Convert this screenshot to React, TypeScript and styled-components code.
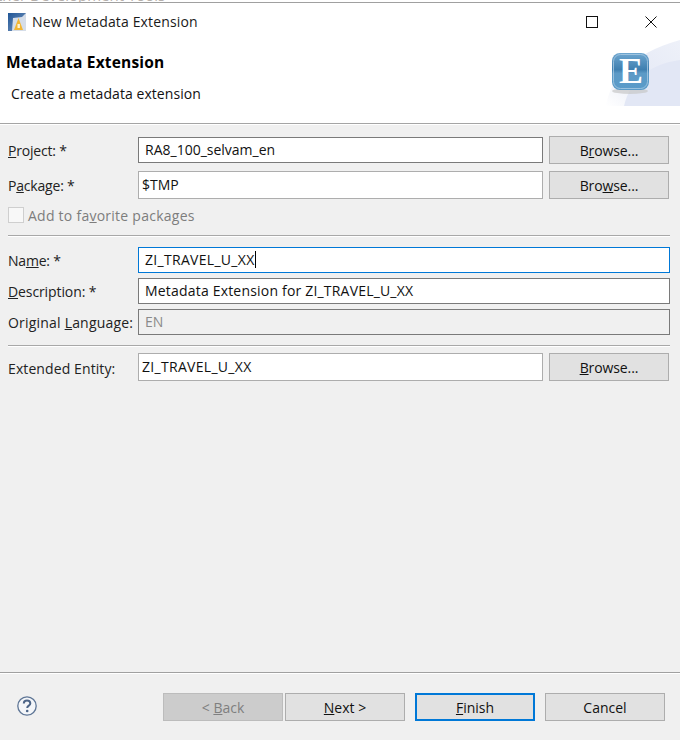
import React from "react";
import styled, { createGlobalStyle } from "styled-components";

const Global = createGlobalStyle`
  html, body { margin: 0; padding: 0; background: #f0f0f0; }
  body { font-family: "Open Sans", "Noto Sans", sans-serif; font-size: 14px; color: #111; }
  #root { width: 680px; height: 740px; overflow: hidden; }
`;

const Window = styled.div`
  width: 680px; height: 740px; display: flex; flex-direction: column; background: #f0f0f0; overflow: hidden;
`;
const TopEdge = styled.div`
  height: 3px; flex: none; background: #fff; border-bottom: 1px solid #a0a0a0; box-sizing: border-box;
  overflow: hidden; font-size: 15px; line-height: 2px; color: #b5b0ac; white-space: nowrap;
`;
const GhostText = styled.div`
  margin-top: -6px; margin-left: -3px;
`;
const TitleBar = styled.div`
  height: 37px; flex: none; background: #fff; display: flex; align-items: center; padding-left: 8px;
`;
const TitleText = styled.span`
  margin-left: 6px; font-size: 14px; letter-spacing: 0.14px; color: #1a1a1a;
`;
const WinButtons = styled.div`
  margin-left: auto; display: flex; align-items: center;
`;
const WinButton = styled.div`
  width: 59px; height: 37px; display: flex; align-items: center; justify-content: center;
`;
const Header = styled.div`
  height: 83px; flex: none; background: #fff; border-bottom: 1px solid #a5a5a5; display: flex;
  box-shadow: 0 1px 0 #fff;
`;
const HeaderText = styled.div`
  flex: 1; display: flex; flex-direction: column; padding-left: 6px;
`;
const HeaderTitle = styled.div`
  font-weight: 700; font-size: 15.5px; line-height: 20px; margin-top: 12px; letter-spacing: 0.18px; color: #000;
`;
const HeaderSub = styled.div`
  font-size: 14px; line-height: 20px; margin: 12px 0 0 5px; letter-spacing: 0.06px; color: #111;
`;
const Banner = styled.svg`
  width: 74px; height: 66px; flex: none; display: block;
`;
const Form = styled.div`
  flex: 1; display: flex; flex-direction: column; padding: 12px 10px 0 8px; min-height: 0;
`;
const Row = styled.div<{ $mt?: number }>`
  display: grid; grid-template-columns: 130px 405px 120px; align-items: center;
  margin-top: ${(p) => p.$mt ?? 0}px; height: 28px;
`;
const WideRow = styled.div<{ $mt?: number }>`
  display: grid; grid-template-columns: 130px 532px; align-items: center;
  margin-top: ${(p) => p.$mt ?? 0}px; height: 26px;
`;
const Label = styled.div<{ $ls?: number; $dy?: number }>`
  font-size: 14px; letter-spacing: ${(p) => p.$ls ?? -0.2}px; color: #222; white-space: nowrap;
  margin-top: ${(p) => p.$dy ?? 0}px;
`;
const Field = styled.div<{ $border?: string; $bg?: string; $color?: string; $pl?: number; $h?: number; $ls?: number }>`
  box-sizing: border-box; height: ${(p) => p.$h ?? 26}px; border: 1px solid ${(p) => p.$border ?? "#7a7a7a"};
  background: ${(p) => p.$bg ?? "#fff"}; color: ${(p) => p.$color ?? "#111"};
  padding-left: ${(p) => p.$pl ?? 6}px; font-size: 14px; line-height: ${(p) => (p.$h ?? 26) - 2}px;
  letter-spacing: ${(p) => p.$ls ?? 0}px; white-space: nowrap;
`;
const Caret = styled.span`
  display: inline-block; width: 1px; height: 17px; background: #000; vertical-align: -3px;
`;
const BrowseButton = styled.div`
  box-sizing: border-box; width: 120px; height: 28px; margin-left: 6px; border: 1px solid #adadad; background: #e1e1e1;
  display: flex; align-items: center; justify-content: center; font-size: 14px; letter-spacing: -0.1px; color: #111;
`;
const CheckRow = styled.div`
  display: flex; align-items: center; margin-top: 8px; height: 16px;
`;
const CheckBox = styled.div`
  box-sizing: border-box; width: 16px; height: 16px; border: 1px solid #cfcfcf; background: #f8f8f8;
`;
const CheckLabel = styled.span`
  margin-left: 4px; color: #7d7d7d; font-size: 14px; letter-spacing: 0.25px;
`;
const Separator = styled.div<{ $mt: number; $mb: number }>`
  height: 1px; background: #a8a8a8; box-shadow: 0 1px 0 #fff; margin: ${(p) => p.$mt}px 0 ${(p) => p.$mb}px 0;
`;
const Footer = styled.div`
  flex: none; box-sizing: border-box; height: 68px; border-top: 1px solid #a0a0a0; box-shadow: inset 0 1px 0 #fff;
  display: flex; align-items: flex-start; padding: 20px 15px 0 17px;
`;
const HelpIcon = styled.svg`
  width: 20px; height: 20px; flex: none; margin-top: 3px;
`;
const Buttons = styled.div`
  margin-left: auto; display: flex;
`;
const FootButton = styled.div<{ $disabled?: boolean; $primary?: boolean; $ml: number }>`
  box-sizing: border-box; width: 120px; height: 28px; margin-left: ${(p) => p.$ml}px;
  border: ${(p) => (p.$primary ? "2px solid #0078d7" : p.$disabled ? "1px solid #bcbcbc" : "1px solid #adadad")};
  background: ${(p) => (p.$disabled ? "#cccccc" : "#e1e1e1")}; color: ${(p) => (p.$disabled ? "#7f7f7f" : "#111")};
  display: flex; align-items: center; justify-content: center; font-size: 14px; letter-spacing: 0;
`;

const AppIcon = () => (
  <svg width="18" height="18" viewBox="0 0 18 18">
    <defs>
      <linearGradient id="ai" x1="0" y1="0" x2="1" y2="1">
        <stop offset="0" stopColor="#1f5597" />
        <stop offset="1" stopColor="#7f9cc0" />
      </linearGradient>
    </defs>
    <rect x="0" y="0" width="18" height="18" fill="#d5dde8" />
    <path d="M0 0 H18 L14 4 L5 5 L4 18 H0 Z" fill="url(#ai)" />
    <path d="M6 17 L10.5 5 L15 17 Z" fill="#f2b632" />
    <path d="M9.5 11 h2.4 v4 H9.5 Z" fill="#fff3cf" />
  </svg>
);

export default function App() {
  return (
    <Window>
      <Global />
      <TopEdge><GhostText>ther Development Tools</GhostText></TopEdge>
      <TitleBar>
        <AppIcon />
        <TitleText>New Metadata Extension</TitleText>
        <WinButtons>
          <WinButton>
            <svg width="12" height="12" viewBox="0 0 12 12">
              <rect x="0.5" y="0.5" width="11" height="11" fill="none" stroke="#111" />
            </svg>
          </WinButton>
          <WinButton>
            <svg width="12" height="12" viewBox="0 0 12 12">
              <path d="M0.5 0.5 L11.5 11.5 M11.5 0.5 L0.5 11.5" stroke="#111" fill="none" />
            </svg>
          </WinButton>
        </WinButtons>
      </TitleBar>
      <Header>
        <HeaderText>
          <HeaderTitle>Metadata Extension</HeaderTitle>
          <HeaderSub>Create a metadata extension</HeaderSub>
        </HeaderText>
        <Banner viewBox="0 0 74 66">
          <defs>
            <linearGradient id="bg" x1="0" y1="1" x2="1" y2="0">
              <stop offset="0" stopColor="#ffffff" />
              <stop offset="0.45" stopColor="#e6eaf6" />
              <stop offset="1" stopColor="#eef1f9" />
            </linearGradient>
            <linearGradient id="eb" x1="0" y1="0" x2="0" y2="1">
              <stop offset="0" stopColor="#6ea6cf" />
              <stop offset="0.45" stopColor="#3f7fb0" />
              <stop offset="0.55" stopColor="#5c9ac6" />
              <stop offset="1" stopColor="#5a9bc9" />
            </linearGradient>
          </defs>
          <path d="M0 66 C4 40 24 14 74 0 L74 66 Z" fill="url(#bg)" />
          <path d="M18 66 C24 40 44 24 74 20 L74 66 Z" fill="#e2e7f5" />
          <ellipse cx="24" cy="51" rx="18" ry="3" fill="#c8c8c8" opacity="0.7" />
          <rect x="6" y="13" width="37" height="37" rx="8" fill="url(#eb)" />
          <rect x="7.5" y="14.5" width="34" height="34" rx="7" fill="none" stroke="#a9cbe3" strokeWidth="1" opacity="0.8" />
          <text x="25" y="43" textAnchor="middle" fontFamily="'Liberation Serif', serif" fontWeight="700" fontSize="36" fill="#fff">E</text>
        </Banner>
      </Header>
      <Form>
        <Row>
          <Label><u>P</u>roject: *</Label>
          <Field>RA8_100_selvam_en</Field>
          <BrowseButton><span>B<u>r</u>owse...</span></BrowseButton>
        </Row>
        <Row $mt={7}>
          <Label>P<u>a</u>ckage: *</Label>
          <Field $border="#adadad" $pl={3} $h={28}>$TMP</Field>
          <BrowseButton><span>Bro<u>w</u>se...</span></BrowseButton>
        </Row>
        <CheckRow>
          <CheckBox />
          <CheckLabel>Add to fa<u>v</u>orite packages</CheckLabel>
        </CheckRow>
        <Separator $mt={12} $mb={11} />
        <WideRow>
          <Label>Na<u>m</u>e: *</Label>
          <Field $border="#0078d7" $ls={0.3}>ZI_TRAVEL_U_XX<Caret /></Field>
        </WideRow>
        <WideRow $mt={5}>
          <Label $ls={-0.1}><u>D</u>escription: *</Label>
          <Field $ls={0.19}>Metadata Extension for ZI_TRAVEL_U_XX</Field>
        </WideRow>
        <WideRow $mt={5}>
          <Label $ls={0.2}>Original <u>L</u>anguage:</Label>
          <Field $bg="#f0f0f0" $color="#8a8a8a">EN</Field>
        </WideRow>
        <Separator $mt={10} $mb={7} />
        <Row>
          <Label $dy={2} $ls={0.1}>Extended Entity:</Label>
          <Field $border="#adadad" $pl={3} $h={28} $ls={0.3}>ZI_TRAVEL_U_XX</Field>
          <BrowseButton><span><u>B</u>rowse...</span></BrowseButton>
        </Row>
      </Form>
      <Footer>
        <HelpIcon viewBox="0 0 20 20">
          <circle cx="10" cy="10" r="9.2" fill="#f4f6f9" stroke="#5f7696" strokeWidth="1.3" />
          <path d="M6.8 7.6 C6.8 5.6 8.3 4.6 10 4.6 C11.9 4.6 13.3 5.7 13.3 7.4 C13.3 9.6 10.2 9.7 10.2 12" fill="none" stroke="#4d6588" strokeWidth="2" />
          <circle cx="10.2" cy="15" r="1.3" fill="#4d6588" />
        </HelpIcon>
        <Buttons>
          <FootButton $disabled $ml={0}><span>&lt; <u>B</u>ack</span></FootButton>
          <FootButton $ml={2}><span><u>N</u>ext &gt;</span></FootButton>
          <FootButton $primary $ml={10}><span><u>F</u>inish</span></FootButton>
          <FootButton $ml={10}>Cancel</FootButton>
        </Buttons>
      </Footer>
    </Window>
  );
}
